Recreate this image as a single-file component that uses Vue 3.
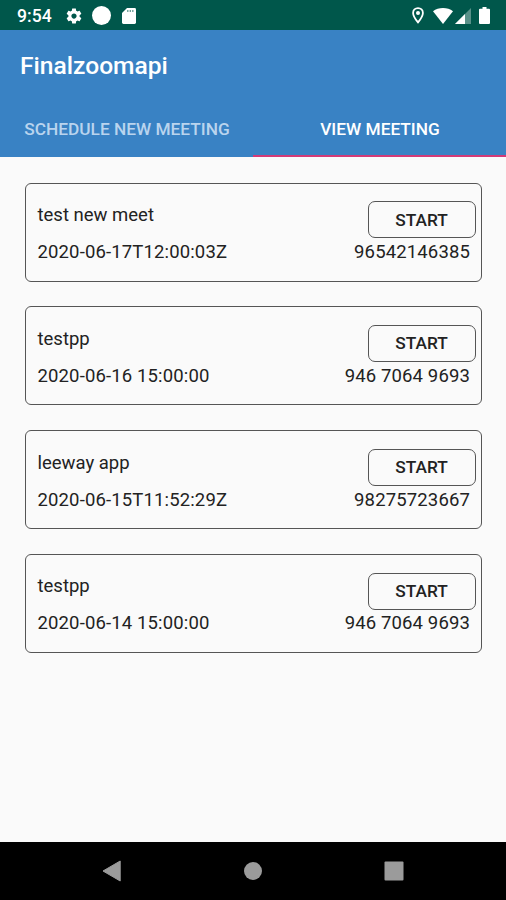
<script setup>
const meetings = [
  { topic: 'test new meet', time: '2020-06-17T12:00:03Z', id: '96542146385' },
  { topic: 'testpp', time: '2020-06-16 15:00:00', id: '946 7064 9693' },
  { topic: 'leeway app', time: '2020-06-15T11:52:29Z', id: '98275723667' },
  { topic: 'testpp', time: '2020-06-14 15:00:00', id: '946 7064 9693' },
]
</script>

<template>
  <div class="screen">
    <div class="status">
      <span class="clock">9:54</span>
      <svg class="gear" width="18" height="18" viewBox="0 0 24 24" fill="#fff">
        <path d="M19.43 12.98c.04-.32.07-.64.07-.98s-.03-.66-.07-.98l2.11-1.65c.19-.15.24-.42.12-.64l-2-3.46c-.12-.22-.39-.3-.61-.22l-2.49 1c-.52-.4-1.08-.73-1.69-.98l-.38-2.65C14.46 2.18 14.25 2 14 2h-4c-.25 0-.46.18-.49.42l-.38 2.65c-.61.25-1.17.59-1.69.98l-2.49-1c-.23-.09-.49 0-.61.22l-2 3.46c-.13.22-.07.49.12.64l2.11 1.65c-.04.32-.07.65-.07.98s.03.66.07.98l-2.11 1.65c-.19.15-.24.42-.12.64l2 3.46c.12.22.39.3.61.22l2.49-1c.52.4 1.08.73 1.69.98l.38 2.65c.03.24.24.42.49.42h4c.25 0 .46-.18.49-.42l.38-2.65c.61-.25 1.17-.59 1.69-.98l2.49 1c.23.09.49 0 .61-.22l2-3.46c.12-.22.07-.49-.12-.64l-2.11-1.65zM12 15.5c-1.93 0-3.5-1.57-3.5-3.5s1.57-3.5 3.5-3.5 3.5 1.57 3.5 3.5-1.57 3.5-3.5 3.5z" />
      </svg>
      <span class="dot"></span>
      <svg class="sd" width="14" height="16" viewBox="0 0 14 16">
        <path d="M5 0H12.6Q14 0 14 1.4V14.6Q14 16 12.6 16H1.4Q0 16 0 14.6V5Z" fill="#fff" />
        <path d="M5.8 2V4M8.3 2V4M10.8 2V4" stroke="#00574b" stroke-opacity=".6" stroke-width="1.3" />
      </svg>
      <span class="spacer"></span>
      <svg class="pin" width="12" height="17" viewBox="0 0 12 17">
        <path d="M6 1.1C3.2 1.1 1.1 3.1 1.1 5.9C1.1 9.3 6 15.4 6 15.4S10.9 9.3 10.9 5.9C10.9 3.1 8.8 1.1 6 1.1Z" fill="none" stroke="#fff" stroke-width="1.8" />
        <circle cx="6" cy="6" r="2" fill="#fff" />
      </svg>
      <svg class="wifi" width="20" height="16" viewBox="0 0 20 16">
        <path d="M0 3.2C2.8 1 6.2 0 10 0S17.2 1 20 3.2L10 16Z" fill="#fff" />
      </svg>
      <svg class="signal" width="16" height="16" viewBox="0 0 16 16">
        <path d="M16 0V16H0Z" fill="#fff" fill-opacity=".35" />
        <path d="M10 6V16H0Z" fill="#fff" />
      </svg>
      <svg class="battery" width="11" height="17" viewBox="0 0 11 17">
        <path d="M3.5 0H7.5V1.8H10Q11 1.8 11 2.8V16Q11 17 10 17H1Q0 17 0 16V2.8Q0 1.8 1 1.8H3.5Z" fill="#fff" />
      </svg>
    </div>

    <header class="appbar">
      <h1 class="title">Finalzoomapi</h1>
      <nav class="tabs">
        <div class="tab"><span>SCHEDULE NEW MEETING</span></div>
        <div class="tab active"><span>VIEW MEETING</span></div>
      </nav>
    </header>

    <main class="list">
      <article v-for="(m, i) in meetings" :key="i" class="card">
        <div class="info">
          <span class="topic">{{ m.topic }}</span>
          <span class="time">{{ m.time }}</span>
        </div>
        <div class="side">
          <button class="start">START</button>
          <span class="number">{{ m.id }}</span>
        </div>
      </article>
    </main>

    <footer class="navbar">
      <svg width="20" height="22" viewBox="0 0 20 22"><path d="M18.2 1V21L1 11Z" fill="#9b9b9b" stroke="#9b9b9b" stroke-linejoin="round" /></svg>
      <svg width="18" height="18" viewBox="0 0 18 18"><circle cx="9" cy="9" r="9" fill="#9b9b9b" /></svg>
      <svg width="20" height="20" viewBox="0 0 20 20"><rect x=".5" y=".5" width="19" height="19" rx="1" fill="#9b9b9b" /></svg>
    </footer>
  </div>
</template>

<style>
body {
  margin: 0;
}
</style>

<style scoped>
.screen {
  width: 506px;
  height: 900px;
  display: flex;
  flex-direction: column;
  background: #fafafa;
  font-family: Roboto, "Liberation Sans", sans-serif;
  overflow: hidden;
}
.status {
  box-sizing: border-box;
  height: 30px;
  flex: none;
  display: flex;
  align-items: center;
  padding: 1px 16px 0 17px;
  background: #00574b;
}
.clock {
  width: 48px;
  color: #fff;
  font-size: 17.6px;
  font-weight: 500;
  line-height: 20px;
}
.dot {
  width: 19px;
  height: 19px;
  margin: 0 11px 0 9px;
  border-radius: 50%;
  background: #fff;
}
.spacer {
  flex: 1;
}
.wifi {
  margin-left: 9px;
}
.signal {
  margin-left: 2px;
}
.battery {
  margin-left: 8px;
}
.appbar {
  height: 127px;
  flex: none;
  display: flex;
  flex-direction: column;
  background: #3982c4;
  color: #fff;
}
.title {
  margin: 0;
  padding: 0 20px;
  height: 71px;
  line-height: 71px;
  box-sizing: border-box;
  font-size: 24.6px;
  font-weight: 500;
}
.tabs {
  flex: 1;
  display: flex;
}
.tab {
  flex: 1;
  box-sizing: border-box;
  display: flex;
  align-items: center;
  justify-content: center;
  padding: 2px 0 0 1px;
  border-bottom: 2px solid transparent;
  font-size: 17.3px;
  font-weight: 500;
  color: #b9d4ee;
}
.tab.active {
  color: #fff;
  border-bottom-color: #d23a78;
}
.list {
  flex: 1;
  padding: 25.6px 24px 0 25px;
  display: flex;
  flex-direction: column;
  gap: 24.8px;
}
.card {
  box-sizing: border-box;
  height: 99px;
  border: 1px solid #555;
  border-radius: 6px;
  display: flex;
  justify-content: space-between;
  padding: 17.6px 5px 0 11.5px;
  color: #222;
  font-size: 18.5px;
  line-height: 22px;
}
.info {
  display: flex;
  flex-direction: column;
  gap: 15px;
  padding-top: 2.9px;
}
.time,
.number {
  letter-spacing: 0.14px;
}
.side {
  display: flex;
  flex-direction: column;
  align-items: flex-end;
  gap: 2.9px;
}
.start {
  box-sizing: border-box;
  width: 108px;
  height: 37px;
  padding: 0 1px 0 0;
  border: 1px solid #555;
  border-radius: 7px;
  background: none;
  color: #222;
  font-family: inherit;
  font-size: 17.3px;
  font-weight: 500;
}
.number {
  padding-right: 6px;
}
.navbar {
  height: 58px;
  flex: none;
  display: flex;
  align-items: center;
  justify-content: space-between;
  padding: 0 102px;
  background: #000;
}
</style>
